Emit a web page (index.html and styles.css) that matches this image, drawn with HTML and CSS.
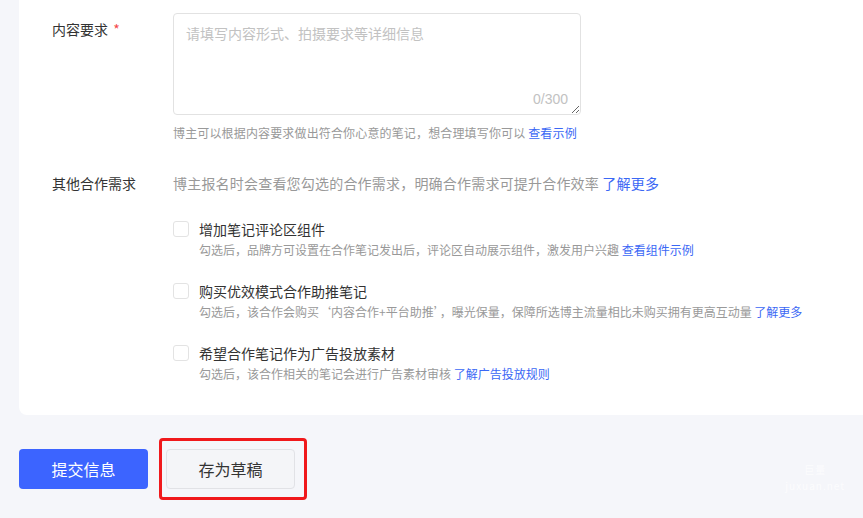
FILE: index.html
```html
<!DOCTYPE html>
<html lang="zh-CN">
  <head>
    <meta charset="UTF-8" />
    <meta name="viewport" content="width=device-width, initial-scale=1.0" />
    <title>合作需求</title>
    <link rel="stylesheet" href="styles.css">
  </head>
  <body>
    <div class="page">
      <div class="form-card">
        <div class="form-row">
          <div class="form-label">内容要求 <span class="required">*</span></div>
          <div class="form-field">
            <div class="textarea-wrap">
              <textarea class="textarea" placeholder="请填写内容形式、拍摄要求等详细信息" maxlength="300"></textarea>
              <span class="counter">0/300</span>
            </div>
            <div class="hint">博主可以根据内容要求做出符合你心意的笔记，想合理填写你可以 <a href="#" class="link">查看示例</a></div>
          </div>
        </div>

        <div class="form-row other">
          <div class="form-label">其他合作需求</div>
          <div class="form-field">
            <div class="intro">博主报名时会查看您勾选的合作需求，明确合作需求可提升合作效率 <a href="#" class="link">了解更多</a></div>

            <div class="options">
              <label class="option">
                <span class="option-title"><input type="checkbox" class="checkbox" />增加笔记评论区组件</span>
                <span class="option-desc">勾选后，品牌方可设置在合作笔记发出后，评论区自动展示组件，激发用户兴趣 <a href="#" class="link">查看组件示例</a></span>
              </label>
              <label class="option">
                <span class="option-title"><input type="checkbox" class="checkbox" />购买优效模式合作助推笔记</span>
                <span class="option-desc">勾选后，该合作会购买‘内容合作+平台助推’，曝光保量，保障所选博主流量相比未购买拥有更高互动量 <a href="#" class="link">了解更多</a></span>
              </label>
              <label class="option">
                <span class="option-title"><input type="checkbox" class="checkbox" />希望合作笔记作为广告投放素材</span>
                <span class="option-desc">勾选后，该合作相关的笔记会进行广告素材审核 <a href="#" class="link">了解广告投放规则</a></span>
              </label>
            </div>
          </div>
        </div>
      </div>

      <div class="actions">
        <button class="btn btn-primary">提交信息</button>
        <div class="draft-wrap">
          <button class="btn btn-default">存为草稿</button>
          <span class="mark"></span>
        </div>
      </div>

      <div class="watermark">
        <span>巨量</span>
        <span>juxuan.net</span>
      </div>
    </div>
  </body>
</html>
```

FILE: styles.css
```css
html {
  overflow: hidden;
}
body {
  margin: 0;
  font-family: "Noto Sans CJK SC", "Noto Sans", sans-serif;
  color: #333;
  background-color: #f5f6fa;
  height: 518px;
}
.page {
  position: relative;
  padding-left: 19px;
  height: 100%;
}
.form-card {
  width: 880px;
  background-color: #fff;
  border-radius: 0 0 8px 8px;
  padding: 13px 0 31px 33px;
}
.form-row {
  display: flex;
}
.form-row.other {
  margin-top: 29px;
}
.form-label {
  width: 121px;
  flex-shrink: 0;
  font-size: 14px;
  line-height: 22px;
  color: #333;
}
.form-row:first-child .form-label {
  padding-top: 5px;
}
.required {
  color: #f5484a;
  margin-left: 2px;
}
.form-field {
  flex: 1;
}
.textarea-wrap {
  position: relative;
  width: 408px;
  height: 102px;
}
.textarea {
  display: block;
  box-sizing: border-box;
  width: 408px;
  height: 102px;
  padding: 8px 12px;
  border: 1px solid #e2e2e2;
  border-radius: 4px;
  font-family: inherit;
  font-size: 14px;
  line-height: 22px;
  color: #333;
  outline: none;
  resize: both;
}
.textarea::placeholder {
  color: #c2c2c2;
}
.counter {
  position: absolute;
  right: 13px;
  bottom: 6px;
  font-family: "Liberation Sans", Arial, sans-serif;
  font-size: 14px;
  line-height: 20px;
  color: #c2c2c2;
}
.hint {
  margin-top: 8px;
  font-size: 12px;
  line-height: 20px;
  color: #999;
  letter-spacing: 0.15px;
}
.link {
  color: #3b68f5;
  text-decoration: none;
}
.intro {
  font-size: 14px;
  line-height: 22px;
  color: #999;
  letter-spacing: 0.2px;
}
.options {
  margin-top: 24px;
  display: flex;
  flex-direction: column;
  gap: 20px;
}
.option {
  display: flex;
  flex-direction: column;
  cursor: pointer;
}
.option-title {
  display: flex;
  align-items: center;
  font-size: 14px;
  line-height: 22px;
  color: #333;
}
.checkbox {
  appearance: none;
  width: 16px;
  height: 16px;
  margin: 0 10px 0 0;
  border: 1px solid #e3e3e3;
  border-radius: 3px;
  background-color: #fff;
}
.option-desc {
  padding-left: 26px;
  font-size: 12px;
  line-height: 20px;
  color: #999;
}
.actions {
  display: flex;
  gap: 18px;
  margin-top: 34px;
}
.btn {
  width: 129px;
  height: 40px;
  border-radius: 4px;
  font-family: inherit;
  font-size: 16px;
  cursor: pointer;
}
.btn-primary {
  border: none;
  background-color: #3c64ff;
  color: #fff;
}
.btn-default {
  border: 1px solid #e1e2e6;
  background-color: #f4f5f8;
  color: #333;
}
.draft-wrap {
  position: relative;
}
.mark {
  position: absolute;
  left: -7px;
  top: -11px;
  right: -12px;
  bottom: -11px;
  border: 3px solid #f0191c;
  border-radius: 4px;
  pointer-events: none;
}
.watermark {
  position: absolute;
  right: 18px;
  bottom: 24px;
  display: flex;
  flex-direction: column;
  align-items: center;
  font-size: 10px;
  line-height: 16px;
  color: rgba(255, 255, 255, 0.7);
  letter-spacing: 1px;
}
```
